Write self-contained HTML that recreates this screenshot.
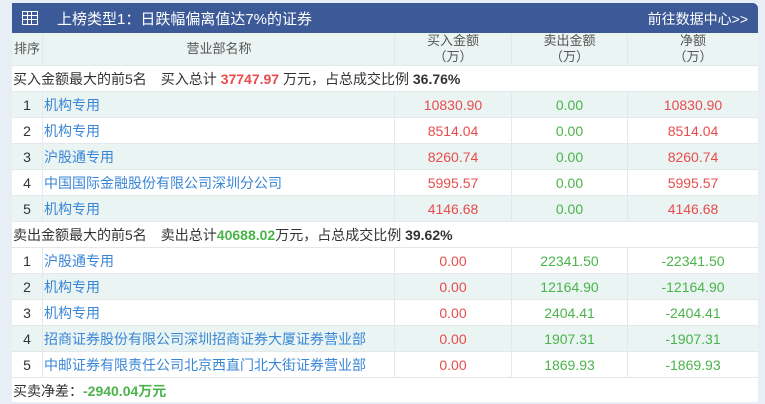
<!DOCTYPE html>
<html><head><meta charset="utf-8"><style>
*{margin:0;padding:0;box-sizing:border-box}
body{width:765px;height:402px;background:#e8eef5;font-family:"Liberation Sans","Noto Sans CJK SC",sans-serif;font-size:13px;color:#333;overflow:hidden;position:relative}
.p{position:absolute;left:12px;top:3px;width:746px;height:399px;background:#fff}
.hd{position:absolute;left:0;top:0;width:746px;height:30px;background:#3c5a98;color:#fff;border-top-right-radius:5px}
.hd .t{position:absolute;left:45px;top:5px;font-size:15px}
.hd .r{position:absolute;right:10px;top:6px;font-size:14px}
.ic{position:absolute;left:10px;top:8px;width:16px;height:14px;border:1.5px solid #fff;background:
linear-gradient(#fff,#fff) 0 3px/100% 1px no-repeat,linear-gradient(#fff,#fff) 0 7px/100% 1px no-repeat,linear-gradient(#fff,#fff) 4px 0/1px 100% no-repeat,linear-gradient(#fff,#fff) 8px 0/1px 100% no-repeat}
.row{position:absolute;left:0;width:746px;height:26px;border-bottom:1px solid #e4e8ea}
.c{position:absolute;top:0;height:100%;border-right:1px solid #e4e8ea;display:flex;align-items:center;justify-content:center;font-size:14px}
.c0{left:0;width:31px}.c1{left:31px;width:352px;justify-content:flex-start;padding-left:1px;color:#3a86d6}
.c2{left:383px;width:117px}.c3{left:500px;width:116px}.c4{left:616px;width:130px;border-right:none}
.t1{background:#eaf4f3}
.red{color:#e84c4c}.grn{color:#4ab44a}
.ch{top:30px;height:33px;background:#eaf4f3}
.ch .c{font-size:13px;color:#555;line-height:16px;text-align:center;flex-direction:column}
.sec{font-size:14px;padding-left:1px;line-height:26px;color:#333}
b.r{color:#e84c4c}b.g{color:#4ab44a}
</style></head><body>
<div class="p">
<div class="hd"><div class="ic"></div><div class="t">上榜类型1：日跌幅偏离值达7%的证券</div><div class="r">前往数据中心&gt;&gt;</div></div>
<div class="row ch"><div class="c c0">排序</div><div class="c c1" style="justify-content:center;color:#555">营业部名称</div><div class="c c2">买入金额<span>（万）</span></div><div class="c c3">卖出金额<span>（万）</span></div><div class="c c4">净额<span>（万）</span></div></div>
<div class="row sec" style="top:63px">买入金额最大的前5名　买入总计 <b class="r">37747.97</b> 万元，占总成交比例 <b>36.76%</b></div>
<div class="row t1" style="top:89px"><div class="c c0">1</div><div class="c c1">机构专用</div><div class="c c2 red">10830.90</div><div class="c c3 grn">0.00</div><div class="c c4 red">10830.90</div></div>
<div class="row" style="top:115px"><div class="c c0">2</div><div class="c c1">机构专用</div><div class="c c2 red">8514.04</div><div class="c c3 grn">0.00</div><div class="c c4 red">8514.04</div></div>
<div class="row t1" style="top:141px"><div class="c c0">3</div><div class="c c1">沪股通专用</div><div class="c c2 red">8260.74</div><div class="c c3 grn">0.00</div><div class="c c4 red">8260.74</div></div>
<div class="row" style="top:167px"><div class="c c0">4</div><div class="c c1">中国国际金融股份有限公司深圳分公司</div><div class="c c2 red">5995.57</div><div class="c c3 grn">0.00</div><div class="c c4 red">5995.57</div></div>
<div class="row t1" style="top:193px"><div class="c c0">5</div><div class="c c1">机构专用</div><div class="c c2 red">4146.68</div><div class="c c3 grn">0.00</div><div class="c c4 red">4146.68</div></div>
<div class="row sec" style="top:219px">卖出金额最大的前5名　卖出总计<b class="g">40688.02</b>万元，占总成交比例 <b>39.62%</b></div>
<div class="row" style="top:245px"><div class="c c0">1</div><div class="c c1">沪股通专用</div><div class="c c2 red">0.00</div><div class="c c3 grn">22341.50</div><div class="c c4 grn">-22341.50</div></div>
<div class="row t1" style="top:271px"><div class="c c0">2</div><div class="c c1">机构专用</div><div class="c c2 red">0.00</div><div class="c c3 grn">12164.90</div><div class="c c4 grn">-12164.90</div></div>
<div class="row" style="top:297px"><div class="c c0">3</div><div class="c c1">机构专用</div><div class="c c2 red">0.00</div><div class="c c3 grn">2404.41</div><div class="c c4 grn">-2404.41</div></div>
<div class="row t1" style="top:323px"><div class="c c0">4</div><div class="c c1">招商证券股份有限公司深圳招商证券大厦证券营业部</div><div class="c c2 red">0.00</div><div class="c c3 grn">1907.31</div><div class="c c4 grn">-1907.31</div></div>
<div class="row" style="top:349px"><div class="c c0">5</div><div class="c c1">中邮证券有限责任公司北京西直门北大街证券营业部</div><div class="c c2 red">0.00</div><div class="c c3 grn">1869.93</div><div class="c c4 grn">-1869.93</div></div>
<div class="row sec" style="top:375px;border:none">买卖净差：<b class="g">-2940.04万元</b></div>
</div>
</body></html>
